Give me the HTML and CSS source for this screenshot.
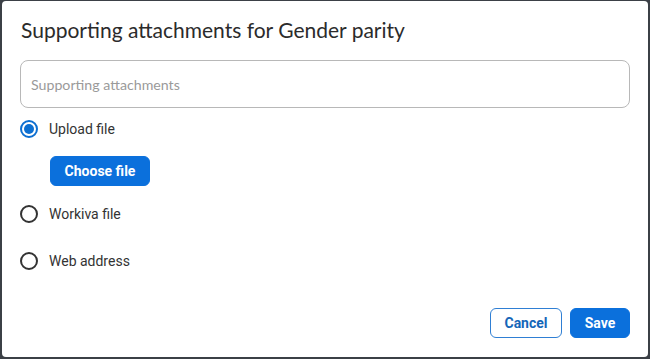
FILE: index.html
```html
<!DOCTYPE html>
<html>
<head>
<meta charset="utf-8">
<link rel="stylesheet" href="styles.css">
</head>
<body>
<div class="dialog">
  <h1 class="title">Supporting attachments for Gender parity</h1>
  <div class="input">Supporting attachments</div>
  <div class="options">
    <label class="radio-row">
      <span class="radio checked"></span>
      <span class="label">Upload file</span>
    </label>
    <div class="choose-wrap"><button class="btn btn-primary choose">Choose file</button></div>
    <label class="radio-row">
      <span class="radio"></span>
      <span class="label">Workiva file</span>
    </label>
    <label class="radio-row">
      <span class="radio"></span>
      <span class="label">Web address</span>
    </label>
  </div>
  <div class="footer">
    <button class="btn btn-outline">Cancel</button>
    <button class="btn btn-primary">Save</button>
  </div>
</div>
</body>
</html>
```
FILE: styles.css
```css
html, body {
  margin: 0;
  padding: 0;
}
body {
  background: #3b4046;
  width: 650px;
  height: 359px;
  padding: 1px 2px 2px 2px;
  box-sizing: border-box;
}
.dialog {
  background: #fff;
  border-radius: 4px;
  height: 356px;
  box-sizing: border-box;
  padding: 17px 18px 19px 18px;
  display: flex;
  flex-direction: column;
}
.title {
  margin: 0 0 0 1px;
  font-family: Lato, "Open Sans", sans-serif;
  font-weight: 400;
  font-size: 21px;
  line-height: 24px;
  color: #2b2b2b;
}
.input {
  margin-top: 18px;
  height: 48px;
  box-sizing: border-box;
  border: 1px solid #b8b8b8;
  border-radius: 8px;
  padding: 0 10px;
  display: flex;
  align-items: center;
  font-family: Lato, "Open Sans", sans-serif;
  font-size: 14.2px;
  color: #9a9a9a;
}
.options {
  margin-top: 11px;
  display: flex;
  flex-direction: column;
}
.radio-row {
  display: flex;
  align-items: center;
  height: 20px;
}
.radio {
  width: 18px;
  height: 18px;
  box-sizing: border-box;
  border: 2px solid #333;
  border-radius: 50%;
  margin-right: 11px;
  display: flex;
  align-items: center;
  justify-content: center;
}
.radio.checked {
  border-color: #0d6fd1;
}
.radio.checked::after {
  content: "";
  width: 10px;
  height: 10px;
  border-radius: 50%;
  background: #0d6fd1;
}
.label {
  font-family: Roboto, "Liberation Sans", sans-serif;
  font-size: 14px;
  color: #333;
}
.choose-wrap {
  margin: 17px 0 18px 30px;
}
.options .radio-row + .radio-row {
  margin-top: 27px;
}
.btn {
  font-family: Roboto, "Liberation Sans", sans-serif;
  font-weight: 700;
  font-size: 14px;
  height: 30px;
  border-radius: 6px;
  box-sizing: border-box;
  cursor: pointer;
}
.btn-primary {
  background: #0b70dc;
  border: 1px solid #0b70dc;
  color: #fff;
}
.choose {
  width: 100px;
  padding: 0;
}
.btn-outline {
  background: #fff;
  border: 1px solid #2f7fd4;
  color: #1566b8;
  width: 72px;
}
.footer {
  margin-top: auto;
  display: flex;
  justify-content: flex-end;
  gap: 8px;
}
.footer .btn-primary {
  width: 60px;
}
```
